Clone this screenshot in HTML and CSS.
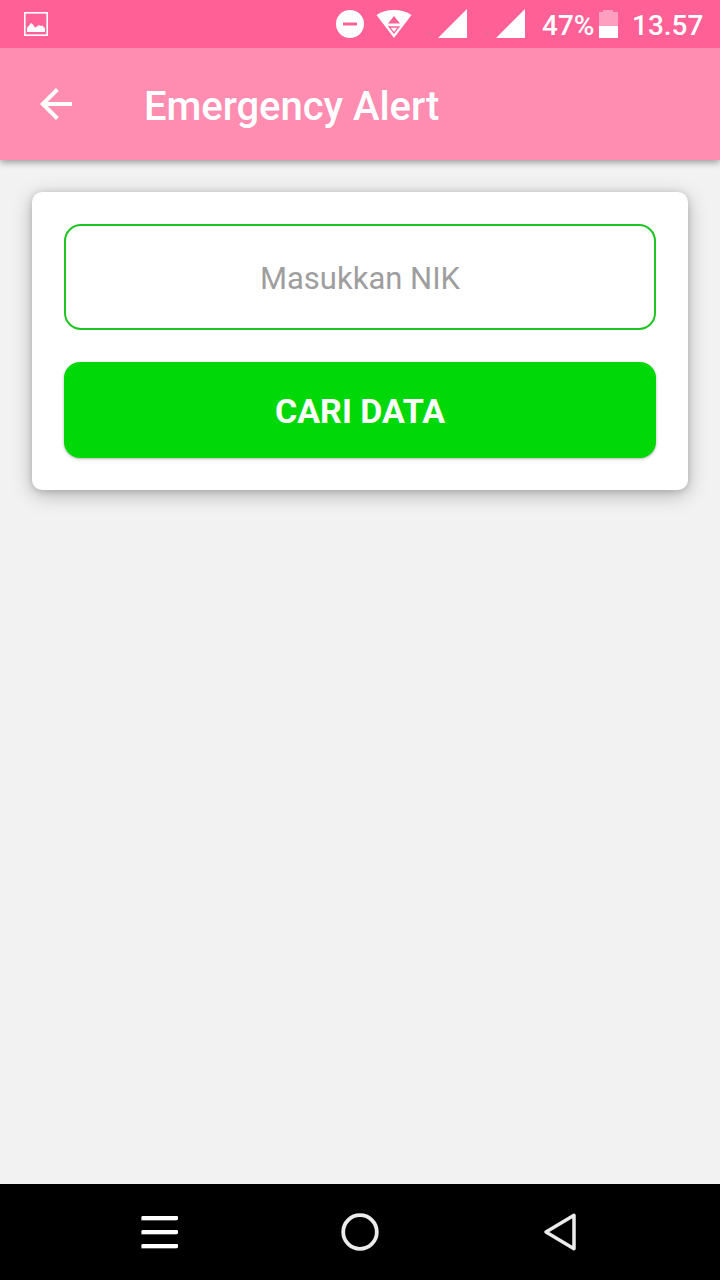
FILE: index.html
```html
<!DOCTYPE html>
<html lang="id">
<head>
<meta charset="utf-8">
<title>Emergency Alert</title>
<link rel="stylesheet" href="styles.css">
</head>
<body>
<div class="screen">
  <div class="status-bar">
    <svg class="photo-icon" width="24" height="24" viewBox="0 0 24 24"><rect x=".8" y=".8" width="22.4" height="22.4" fill="none" stroke="#fff" stroke-width="1.6"/><path d="M3 20v-4l4-5 1.500 1 2.500 3.500 2-1 2-1.500 2 1 1.500-.5 2.500 3V20z" fill="#fff"/></svg>
    <div class="status-icons">
      <svg class="dnd-icon" width="28" height="28" viewBox="0 0 28 28"><circle cx="14" cy="14" r="14" fill="#fff"/><path d="M7 14h14" stroke="#ff6095" stroke-width="3"/></svg>
      <svg class="wifi-icon" width="36" height="28" viewBox="0 0 36 28"><path d="M18 28L.5 5Q8 0 18 0t17.500 5z" fill="#fff"/><path d="M18 6l6 7.500H12z" fill="#ff6095"/><path d="M13.200 17h9.600L18 23z" fill="none" stroke="#ff6095" stroke-width="1.300"/></svg>
      <svg class="signal-icon" width="40" height="28" viewBox="0 0 40 28"><path d="M40-1v29H11z" fill="#fff"/><circle cx="2" cy="23" r="2" fill="#e66a96"/></svg>
      <svg class="signal-icon second" width="40" height="28" viewBox="0 0 40 28"><path d="M40-1v29H11z" fill="#fff"/><circle cx="2" cy="23" r="2" fill="#e66a96"/></svg>
      <span class="percent">47%</span>
      <svg class="battery-icon" width="19" height="28" viewBox="0 0 19 28"><path d="M0 2h4V0h10v2h5v14H0z" fill="#ff9fc0"/><path d="M0 16h19v12H0z" fill="#fff"/></svg>
      <span class="clock">13.57</span>
    </div>
  </div>
  <header class="app-bar">
    <svg class="back-icon" width="32" height="32" viewBox="0 0 32 32" fill="none" stroke="#fff" stroke-width="4"><path d="M32 16H3M17.400 1.500L2.800 16l14.600 14.500"/></svg>
    <h1 class="title">Emergency Alert</h1>
  </header>
  <main class="content">
    <form class="card">
      <input class="nik-input" type="text" placeholder="Masukkan NIK" aria-label="Masukkan NIK">
      <button class="search-button" type="button">CARI DATA</button>
    </form>
  </main>
  <nav class="nav-bar">
    <svg class="menu-icon" width="38" height="36" viewBox="0 0 38 36"><g fill="#555"><rect x="1" y="3" width="36" height="4" rx="1"/><rect x="1" y="17" width="36" height="4" rx="1"/><rect x="1" y="31" width="36" height="4" rx="1"/></g><g fill="#fff"><rect x="1.500" y="2" width="36.500" height="4" rx="1"/><rect x="1.500" y="16" width="36.500" height="4" rx="1"/><rect x="1.500" y="30" width="36.500" height="4" rx="1"/></g></svg>
    <svg class="home-icon" width="38" height="38" viewBox="0 0 38 38"><circle cx="19" cy="19" r="16.800" fill="none" stroke="#ececec" stroke-width="3.800"/></svg>
    <svg class="nav-back-icon" width="34" height="38" viewBox="0 0 34 38"><path d="M31 2.300v33.400L3 19z" fill="none" stroke="#ececec" stroke-width="3.500" stroke-linejoin="round"/></svg>
  </nav>
</div>
</body>
</html>
```
FILE: styles.css
```css
* { box-sizing: border-box; }
body { margin: 0; font-family: Roboto, "Liberation Sans", sans-serif; }
svg { display: block; flex: none; overflow: visible; }
.screen {
  width: 720px;
  height: 1280px;
  display: flex;
  flex-direction: column;
  background: #f2f2f2;
  overflow: hidden;
}
.status-bar {
  position: relative;
  z-index: 1;
  height: 48px;
  flex: none;
  display: flex;
  align-items: center;
  justify-content: space-between;
  padding: 0 16px 0 24px;
  background: #ff6095;
  color: #fff;
}
.status-icons { display: flex; align-items: center; height: 48px; }
.wifi-icon { margin-left: 12px; }
.signal-icon { margin-left: 15px; }
.second { margin-left: 18px; }
.percent { margin-left: 17px; width: 53px; font-size: 28px; font-weight: 500; line-height: 32px; padding-top: 4px; }
.battery-icon { margin-left: 4px; }
.clock { width: 72px; margin-left: 14px; font-size: 28px; font-weight: 500; line-height: 32px; padding-top: 4px; }
.app-bar {
  height: 112px;
  flex: none;
  display: flex;
  align-items: center;
  padding-left: 40px;
  background: #ff8cb1;
  box-shadow: 0 2px 7px rgba(0, 0, 0, .4);
}
.title { margin: 6px 0 0 72px; color: #fff; font-size: 40px; font-weight: 500; line-height: 48px; letter-spacing: -.05px; }
.content { flex: 1; padding: 32px; }
.card {
  height: 298px;
  display: flex;
  flex-direction: column;
  gap: 32px;
  padding: 32px;
  background: #fff;
  border-radius: 10px;
  box-shadow: 0 5px 20px rgba(0, 0, 0, .25), 0 1px 7px rgba(0, 0, 0, .16);
}
.nik-input {
  width: 100%;
  height: 106px;
  padding: 2px 0 0;
  border: 2px solid #1dc522;
  border-radius: 17px;
  background: #fff;
  font: 400 31px Roboto, sans-serif;
  text-align: center;
}
.nik-input::placeholder { color: #9e9e9e; opacity: 1; }
.search-button {
  height: 96px;
  padding: 2px 0 0;
  border: 0;
  border-radius: 16px;
  background: #00d907;
  color: #fff;
  font: 700 34px Roboto, sans-serif;
  box-shadow: 0 1px 3px rgba(0, 0, 0, .3);
}
.nav-bar {
  height: 96px;
  flex: none;
  display: flex;
  align-items: center;
  padding-left: 140px;
  background: #000;
}
.home-icon { margin-left: 163px; }
.nav-back-icon { margin-left: 164px; }
```
